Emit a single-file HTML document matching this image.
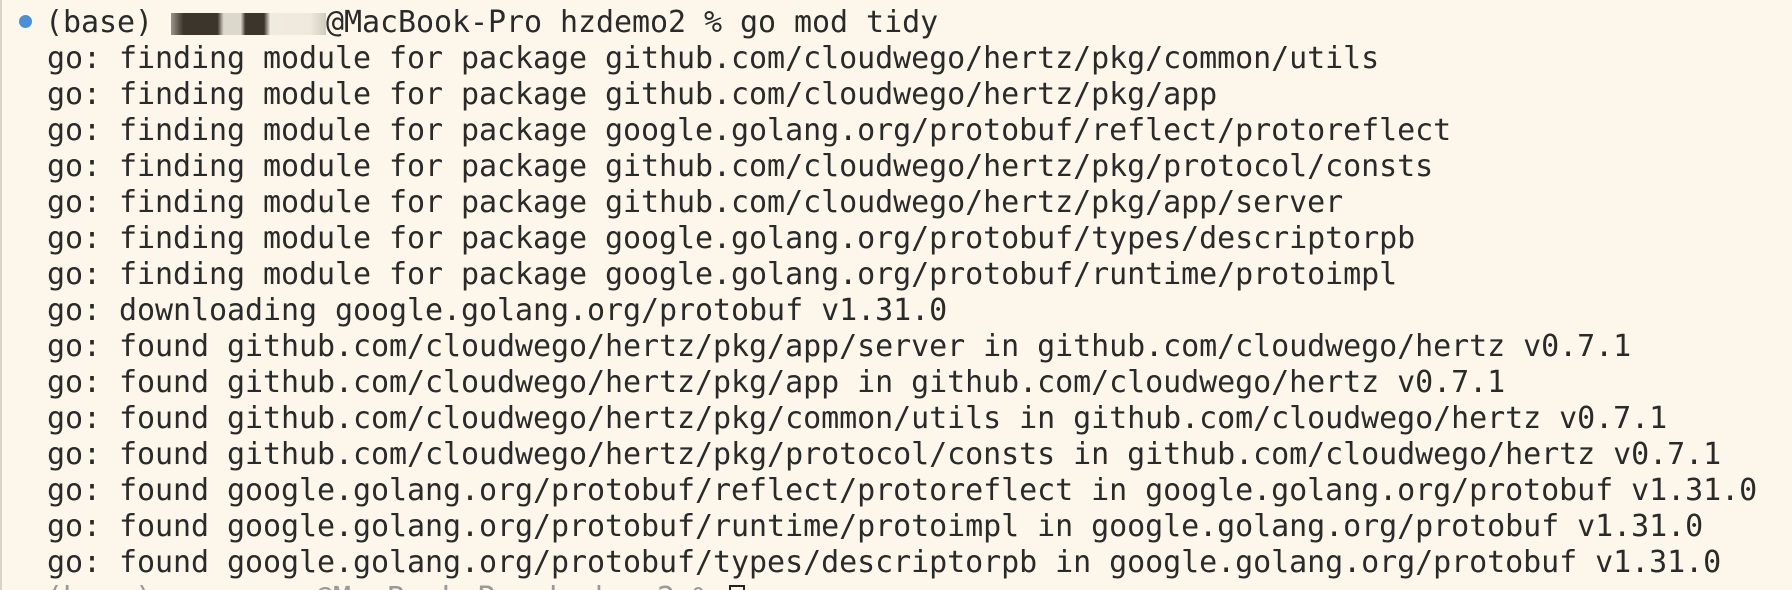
<!DOCTYPE html>
<html style="width:1792px;height:590px;overflow:hidden"><head><meta charset="utf-8"><style>
html,body{margin:0;padding:0;}
body{width:1792px;height:590px;overflow:hidden;background:#fcf7ea;position:relative;font-family:"DejaVu Sans Mono","Liberation Mono",monospace;font-size:30px;letter-spacing:-0.06px;color:#2a2a2a;}
.bl{position:absolute;left:0;top:0;width:2px;height:590px;background:#d8d4c8;}
.l{position:absolute;left:47px;white-space:pre;line-height:36px;height:36px;}
.dot{position:absolute;width:13px;height:13px;border-radius:50%;background:#4a90d9;left:19px;}
.dot2{position:absolute;width:13px;height:13px;border-radius:50%;background:#b9b5ad;left:19px;}
.blur{display:inline-block;width:155px;height:22px;vertical-align:middle;background:linear-gradient(90deg,#9a958a 0,#3c352c 8%,#3c352c 30%,#ddd8cc 34%,#ddd8cc 45%,#3c352c 48%,#3c352c 60%,#f0ebe0 64%,#efe9dc 90%,#d0cbbf 100%);}
.cur{display:inline-block;width:16px;height:30px;border:2px solid #222;box-sizing:border-box;vertical-align:middle;}
</style></head><body>
<div class="bl"></div>
<div class="dot" style="top:15px"></div>
<div class="l" style="left:45px;top:5px">(base) <span class="blur"></span>@MacBook-Pro hzdemo2 % go mod tidy</div>
<div class="l" style="top:41px">go: finding module for package github.com/cloudwego/hertz/pkg/common/utils</div>
<div class="l" style="top:77px">go: finding module for package github.com/cloudwego/hertz/pkg/app</div>
<div class="l" style="top:113px">go: finding module for package google.golang.org/protobuf/reflect/protoreflect</div>
<div class="l" style="top:149px">go: finding module for package github.com/cloudwego/hertz/pkg/protocol/consts</div>
<div class="l" style="top:185px">go: finding module for package github.com/cloudwego/hertz/pkg/app/server</div>
<div class="l" style="top:221px">go: finding module for package google.golang.org/protobuf/types/descriptorpb</div>
<div class="l" style="top:257px">go: finding module for package google.golang.org/protobuf/runtime/protoimpl</div>
<div class="l" style="top:293px">go: downloading google.golang.org/protobuf v1.31.0</div>
<div class="l" style="top:329px">go: found github.com/cloudwego/hertz/pkg/app/server in github.com/cloudwego/hertz v0.7.1</div>
<div class="l" style="top:365px">go: found github.com/cloudwego/hertz/pkg/app in github.com/cloudwego/hertz v0.7.1</div>
<div class="l" style="top:401px">go: found github.com/cloudwego/hertz/pkg/common/utils in github.com/cloudwego/hertz v0.7.1</div>
<div class="l" style="top:437px">go: found github.com/cloudwego/hertz/pkg/protocol/consts in github.com/cloudwego/hertz v0.7.1</div>
<div class="l" style="top:473px">go: found google.golang.org/protobuf/reflect/protoreflect in google.golang.org/protobuf v1.31.0</div>
<div class="l" style="top:509px">go: found google.golang.org/protobuf/runtime/protoimpl in google.golang.org/protobuf v1.31.0</div>
<div class="l" style="top:545px">go: found google.golang.org/protobuf/types/descriptorpb in google.golang.org/protobuf v1.31.0</div>
<div class="dot2" style="top:591px"></div>
<div class="l" style="left:45px;top:581px;color:#999">(base) xxxxxxxx@MacBook-Pro hzdemo2 % <span class="cur"></span></div>
</body></html>
